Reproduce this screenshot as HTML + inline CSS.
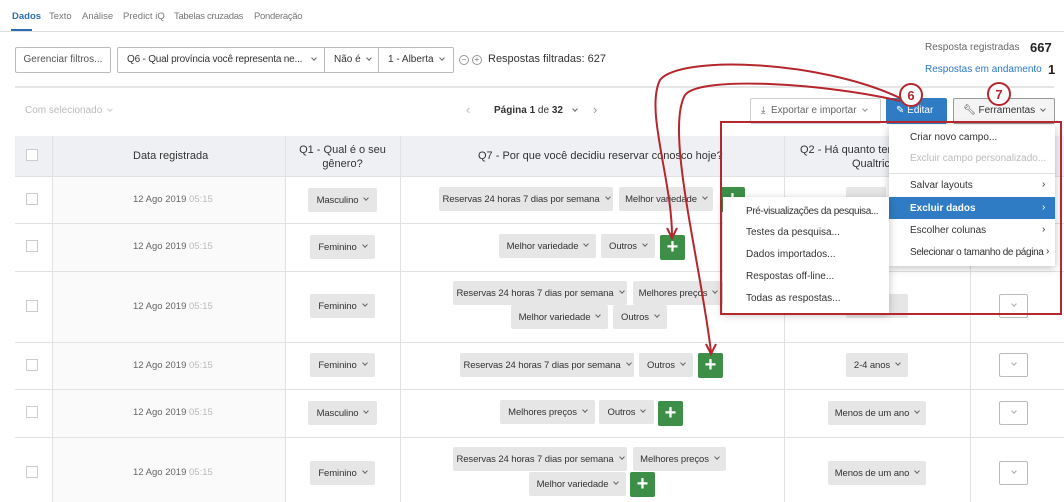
<!DOCTYPE html>
<html><head><meta charset="utf-8"><style>
*{box-sizing:border-box;margin:0;padding:0}
body{width:1064px;height:502px;overflow:hidden;background:#fff;font-family:"Liberation Sans",sans-serif;font-size:10px;color:#333;position:relative}
.a{position:absolute;white-space:nowrap}
.v{display:inline-block;width:4px;height:4px;border-right:1px solid #666;border-bottom:1px solid #666;transform:rotate(45deg);margin-left:6px;position:relative;top:-2px}
.chip{position:absolute;height:24px;background:#e6e6e6;border-radius:2px;font-size:9.5px;color:#333;display:flex;align-items:center;justify-content:center;white-space:nowrap;letter-spacing:-0.1px}
.plus{position:absolute;width:25px;height:25px;background:#3d8f48;border-radius:2px;color:#fff;font-weight:bold;font-size:20px;line-height:24px;text-align:center}
.hl{position:absolute;height:1px;background:#e2e2e2}
.vl{position:absolute;width:1px;background:#e2e2e2}
.cb{position:absolute;left:26px;width:12px;height:12px;border:1px solid #ccc;background:#fff}
.date{position:absolute;left:133px;color:#666;font-size:9.5px}
.date span{color:#bbb}
.sel{position:absolute;width:29px;height:24px;border:1px solid #bbb;border-radius:2px;display:flex;align-items:center;justify-content:center}
.sel .v{margin:0;border-color:#aaa}
.mi{position:absolute;left:910px;font-size:10px;color:#333}
.si{position:absolute;left:746px;font-size:10px;color:#333}
</style></head><body>
<div class="a" style="left:12px;top:11px;color:#2a6fb5;font-weight:bold;font-size:9.5px">Dados</div>
<div class="a" style="left:49px;top:11px;color:#777;font-size:9.5px">Texto</div>
<div class="a" style="left:82px;top:11px;color:#777;font-size:9.5px">Análise</div>
<div class="a" style="left:123px;top:11px;color:#777;font-size:9.5px">Predict iQ</div>
<div class="a" style="left:174px;top:11px;color:#777;font-size:9.5px;letter-spacing:-0.3px">Tabelas cruzadas</div>
<div class="a" style="left:254px;top:11px;color:#777;font-size:9.5px;letter-spacing:-0.3px">Ponderação</div>
<div class="a" style="left:0;top:31px;width:1064px;height:1px;background:#ddd"></div>
<div class="a" style="left:11px;top:29px;width:21px;height:2px;background:#2a6fb5"></div>
<div class="a" style="left:15px;top:47px;width:96px;height:26px;border:1px solid #bbb;border-radius:2px;line-height:24px;text-align:center;color:#555">Gerenciar filtros...</div>
<div class="a" style="left:117px;top:47px;width:337px;height:26px;border:1px solid #bbb;border-radius:2px"></div>
<div class="a" style="left:127px;top:47px;line-height:26px;color:#333;letter-spacing:-0.2px">Q6 - Qual província você representa ne...<span class="v" style="margin-left:10px"></span></div>
<div class="a" style="left:324px;top:47px;width:1px;height:26px;background:#bbb"></div>
<div class="a" style="left:334px;top:47px;line-height:26px">Não é<span class="v"></span></div>
<div class="a" style="left:378px;top:47px;width:1px;height:26px;background:#bbb"></div>
<div class="a" style="left:388px;top:47px;line-height:26px">1 - Alberta<span class="v"></span></div>
<div class="a" style="left:459px;top:55px;width:10px;height:10px;border:1px solid #999;border-radius:50%;font-size:8px;line-height:8px;text-align:center;color:#777">−</div>
<div class="a" style="left:472px;top:55px;width:10px;height:10px;border:1px solid #999;border-radius:50%;font-size:8px;line-height:8px;text-align:center;color:#777">+</div>
<div class="a" style="left:488px;top:53px;font-size:11px;color:#333">Respostas filtradas: 627</div>
<div class="a" style="left:925px;top:42px;color:#666">Resposta registradas</div>
<div class="a" style="left:1030px;top:40px;font-size:13px;font-weight:bold;color:#222">667</div>
<div class="a" style="left:925px;top:64px;color:#2a78c8">Respostas em andamento</div>
<div class="a" style="left:1048px;top:62px;font-size:13px;font-weight:bold;color:#222">1</div>
<div class="a" style="left:15px;top:86px;width:1039px;height:2px;background:#e6e6e6"></div>
<div class="a" style="left:25px;top:105px;color:#bbb">Com selecionado<span class="v" style="border-color:#ccc"></span></div>
<div class="a" style="left:466px;top:102px;color:#bbb;font-size:13px">‹</div>
<div class="a" style="left:494px;top:105px"><b>Página 1</b> de <b>32</b><span class="v" style="margin-left:10px"></span></div>
<div class="a" style="left:593px;top:102px;color:#999;font-size:13px">›</div>
<div class="a" style="left:750px;top:98px;width:131px;height:26px;border:1px solid #ccc;border-radius:2px;line-height:24px;padding-left:10px;color:#666">⤓&nbsp; Exportar e importar<span class="v" style="border-color:#999"></span></div>
<div class="a" style="left:886px;top:98px;width:61px;height:26px;background:#2f7cc4;border-radius:2px;line-height:26px;color:#fff;padding-left:10px">✎ Editar</div>
<div class="a" style="left:953px;top:98px;width:102px;height:26px;border:1px solid #999;background:#f4f4f4;border-radius:2px;line-height:24px;padding-left:9px;color:#333">🔧︎ Ferramentas<span class="v"></span></div>
<div class="a" style="left:15px;top:136px;width:1049px;height:40px;background:#eef0f4"></div>
<div class="a" style="left:52px;top:176px;width:233px;height:326px;background:#fafafa"></div>
<div class="vl" style="left:52px;top:136px;height:366px"></div>
<div class="vl" style="left:285px;top:136px;height:366px"></div>
<div class="vl" style="left:400px;top:136px;height:366px"></div>
<div class="vl" style="left:784px;top:136px;height:366px"></div>
<div class="vl" style="left:970px;top:176px;height:326px"></div>
<div class="cb" style="top:149px"></div>
<div class="a" style="left:133px;top:150px;font-size:11px">Data registrada</div>
<div class="a" style="left:285px;top:143px;width:115px;text-align:center;font-size:11px;white-space:normal;line-height:14px">Q1 - Qual é o seu gênero?</div>
<div class="a" style="left:478px;top:150px;font-size:11px">Q7 - Por que você decidiu reservar conosco hoje?</div>
<div class="a" style="left:800px;top:143px;font-size:11px;line-height:14px">Q2 - Há quanto tem</div>
<div class="a" style="left:852px;top:157px;font-size:11px;line-height:14px">Qualtric</div>
<div class="hl" style="left:15px;top:176px;width:1049px"></div>
<div class="hl" style="left:15px;top:223px;width:1049px"></div>
<div class="hl" style="left:15px;top:271px;width:1049px"></div>
<div class="hl" style="left:15px;top:342px;width:1049px"></div>
<div class="hl" style="left:15px;top:389px;width:1049px"></div>
<div class="hl" style="left:15px;top:437px;width:1049px"></div>

<div class="cb" style="top:193px"></div><div class="date" style="top:194px">12 Ago 2019 <span>05:15</span></div>
<div class="chip" style="left:308px;top:188px;width:69px">Masculino<span class="v"></span></div>
<div class="chip" style="left:439px;top:187px;width:174px">Reservas 24 horas 7 dias por semana<span class="v"></span></div>
<div class="chip" style="left:619px;top:187px;width:94px">Melhor variedade<span class="v"></span></div>
<div class="plus" style="left:720px;top:187px">+</div>
<div class="chip" style="left:846px;top:187px;width:40px"></div>

<div class="cb" style="top:240px"></div><div class="date" style="top:241px">12 Ago 2019 <span>05:15</span></div>
<div class="chip" style="left:310px;top:235px;width:65px">Feminino<span class="v"></span></div>
<div class="chip" style="left:499px;top:234px;width:97px">Melhor variedade<span class="v"></span></div>
<div class="chip" style="left:601px;top:234px;width:54px">Outros<span class="v"></span></div>
<div class="plus" style="left:660px;top:235px">+</div>

<div class="cb" style="top:300px"></div><div class="date" style="top:301px">12 Ago 2019 <span>05:15</span></div>
<div class="chip" style="left:310px;top:294px;width:65px">Feminino<span class="v"></span></div>
<div class="chip" style="left:453px;top:281px;width:174px">Reservas 24 horas 7 dias por semana<span class="v"></span></div>
<div class="chip" style="left:633px;top:281px;width:90px">Melhores preços<span class="v"></span></div>
<div class="chip" style="left:511px;top:305px;width:97px">Melhor variedade<span class="v"></span></div>
<div class="chip" style="left:613px;top:305px;width:54px">Outros<span class="v"></span></div>
<div class="chip" style="left:846px;top:294px;width:62px"><span class="v"></span></div>
<div class="sel" style="left:999px;top:294px"><span class="v"></span></div>

<div class="cb" style="top:359px"></div><div class="date" style="top:360px">12 Ago 2019 <span>05:15</span></div>
<div class="chip" style="left:310px;top:353px;width:65px">Feminino<span class="v"></span></div>
<div class="chip" style="left:460px;top:353px;width:174px">Reservas 24 horas 7 dias por semana<span class="v"></span></div>
<div class="chip" style="left:639px;top:353px;width:54px">Outros<span class="v"></span></div>
<div class="plus" style="left:698px;top:353px">+</div>
<div class="chip" style="left:846px;top:353px;width:62px">2-4 anos<span class="v"></span></div>
<div class="sel" style="left:999px;top:353px"><span class="v"></span></div>

<div class="cb" style="top:406px"></div><div class="date" style="top:407px">12 Ago 2019 <span>05:15</span></div>
<div class="chip" style="left:308px;top:401px;width:69px">Masculino<span class="v"></span></div>
<div class="chip" style="left:500px;top:400px;width:95px">Melhores preços<span class="v"></span></div>
<div class="chip" style="left:599px;top:400px;width:55px">Outros<span class="v"></span></div>
<div class="plus" style="left:658px;top:401px">+</div>
<div class="chip" style="left:828px;top:401px;width:98px">Menos de um ano<span class="v"></span></div>
<div class="sel" style="left:999px;top:401px"><span class="v"></span></div>

<div class="cb" style="top:466px"></div><div class="date" style="top:467px">12 Ago 2019 <span>05:15</span></div>
<div class="chip" style="left:310px;top:461px;width:65px">Feminino<span class="v"></span></div>
<div class="chip" style="left:453px;top:447px;width:174px">Reservas 24 horas 7 dias por semana<span class="v"></span></div>
<div class="chip" style="left:633px;top:447px;width:93px">Melhores preços<span class="v"></span></div>
<div class="chip" style="left:529px;top:472px;width:97px">Melhor variedade<span class="v"></span></div>
<div class="plus" style="left:630px;top:472px">+</div>
<div class="chip" style="left:828px;top:461px;width:98px">Menos de um ano<span class="v"></span></div>
<div class="sel" style="left:999px;top:461px"><span class="v"></span></div>

<div class="a" style="left:889px;top:125px;width:166px;height:141px;background:#fff;box-shadow:0 2px 8px rgba(0,0,0,.25)"></div>
<div class="mi" style="top:132px">Criar novo campo...</div>
<div class="mi" style="top:153px;color:#bbb">Excluir campo personalizado...</div>
<div class="a" style="left:889px;top:173px;width:166px;height:1px;background:#e2e2e2"></div>
<div class="mi" style="top:180px">Salvar layouts</div><div class="a" style="left:1042px;top:179px">›</div>
<div class="a" style="left:889px;top:197px;width:166px;height:22px;background:#2f7cc4"></div>
<div class="mi" style="top:203px;color:#fff;font-weight:bold">Excluir dados</div><div class="a" style="left:1042px;top:202px;color:#fff">›</div>
<div class="mi" style="top:225px">Escolher colunas</div><div class="a" style="left:1042px;top:224px">›</div>
<div class="mi" style="top:247px;letter-spacing:-0.35px">Selecionar o tamanho de página</div><div class="a" style="left:1046px;top:246px">›</div>
<div class="a" style="left:723px;top:197px;width:166px;height:116px;background:#fff;box-shadow:0 2px 8px rgba(0,0,0,.25)"></div>
<div class="si" style="top:206px;letter-spacing:-0.35px">Pré-visualizações da pesquisa...</div>
<div class="si" style="top:227px">Testes da pesquisa...</div>
<div class="si" style="top:249px">Dados importados...</div>
<div class="si" style="top:271px">Respostas off-line...</div>
<div class="si" style="top:293px">Todas as respostas...</div>
<svg class="a" style="left:0;top:0" width="1064" height="502">
<g fill="none" stroke="#b5262d" stroke-width="2">
<rect x="721" y="122" width="340" height="192"/>
<path d="M900,98 C820,60 680,55 660,80 C645,110 672,180 672,236"/>
<path d="M900,101 C830,84 700,75 685,95 C665,130 700,260 711,352"/>
<circle cx="911" cy="95" r="11" fill="#fff"/>
<circle cx="999" cy="94" r="11" fill="#fff"/>
</g>
<path d="M667,228 L672,238 L677,228" fill="none" stroke="#b5262d" stroke-width="2"/>
<path d="M706,344 L711,354 L716,344" fill="none" stroke="#b5262d" stroke-width="2"/>
<text x="911" y="100" text-anchor="middle" font-family="Liberation Sans" font-size="13" font-weight="bold" fill="#b5262d">6</text>
<text x="999" y="99" text-anchor="middle" font-family="Liberation Sans" font-size="13" font-weight="bold" fill="#b5262d">7</text>
</svg>
</body></html>
